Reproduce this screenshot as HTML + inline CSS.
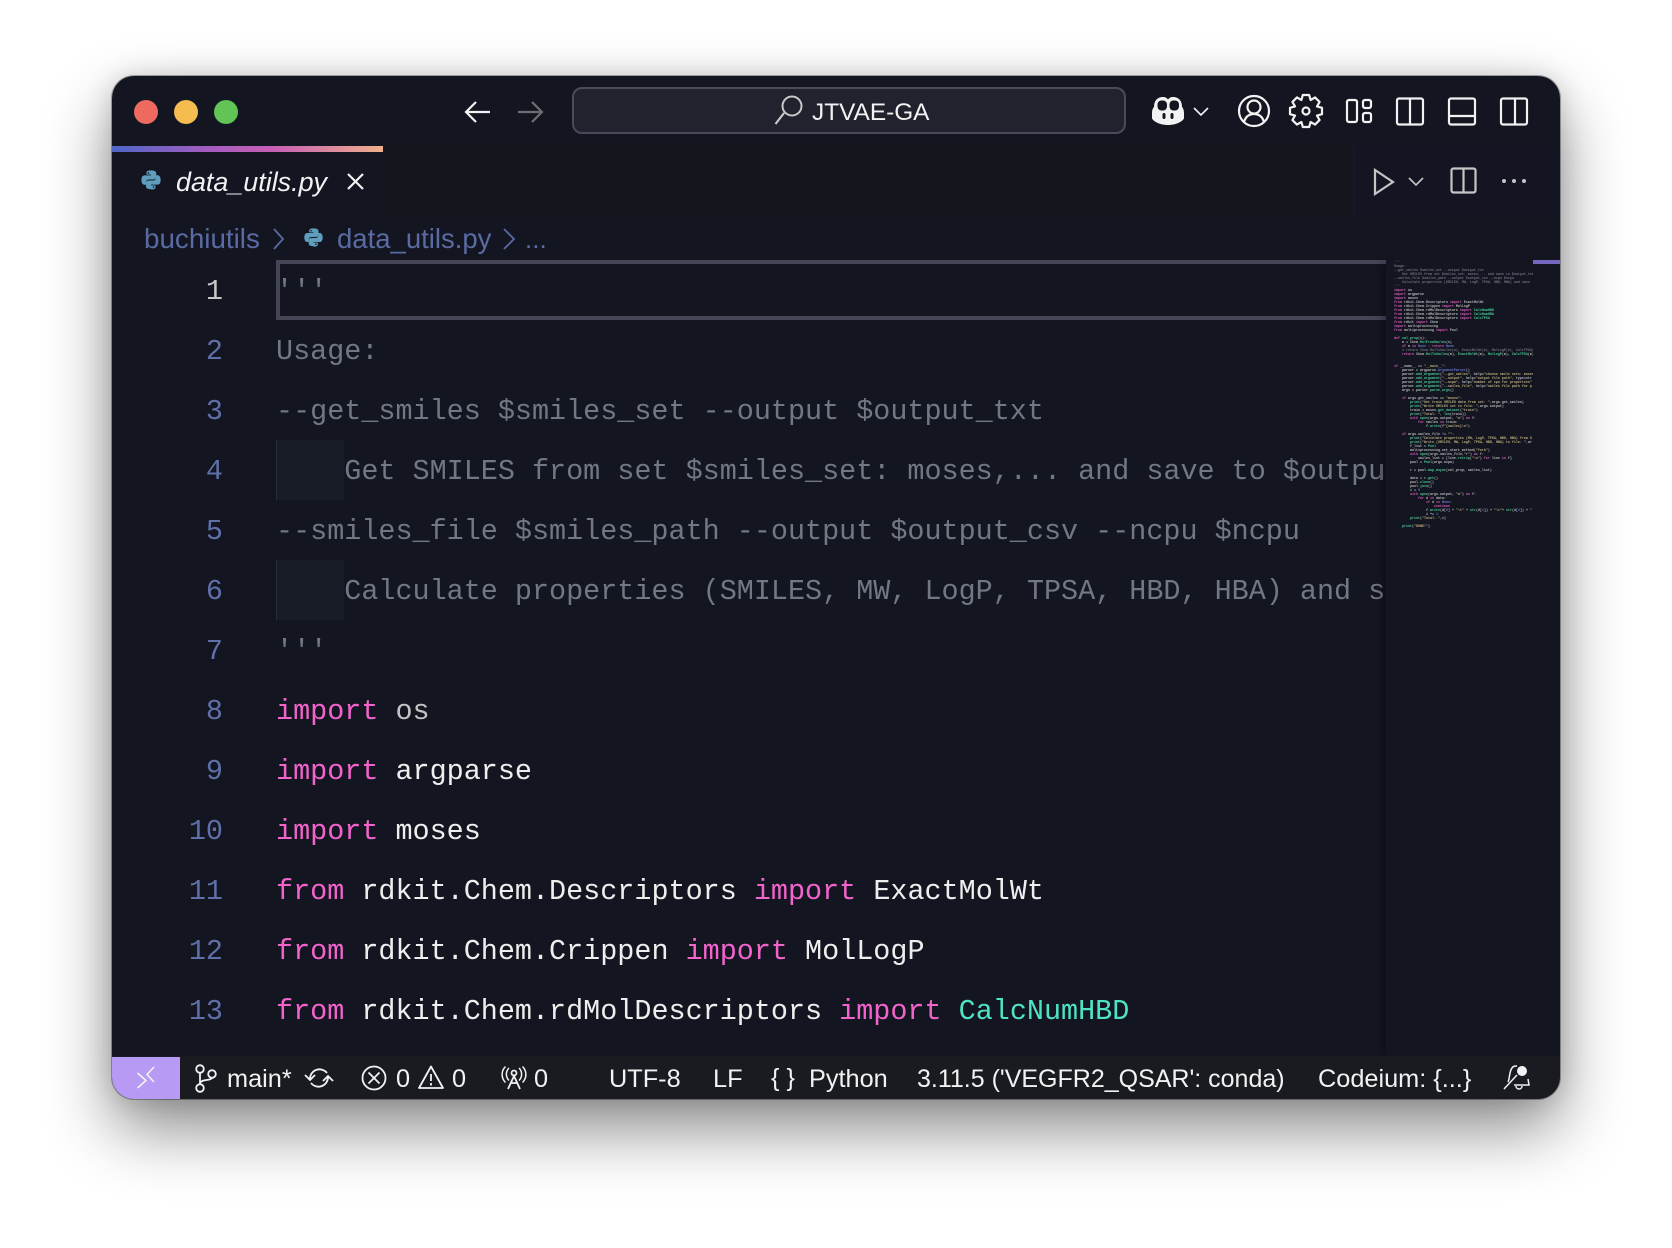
<!DOCTYPE html>
<html><head><meta charset="utf-8">
<style>
html,body{margin:0;padding:0;width:1672px;height:1248px;overflow:hidden;background:#fff}
*{box-sizing:border-box}
#win{position:absolute;left:112px;top:76px;width:1448px;height:1023px;background:#131520;border-radius:22px;overflow:hidden;}
#shadow{position:absolute;left:112px;top:76px;width:1448px;height:1023px;border-radius:22px;box-shadow:0 30px 66px 0 rgba(0,0,0,.46),0 0 26px rgba(0,0,0,.14),0 0 0 1px rgba(0,0,0,.3)}
.abs{position:absolute}
.t{position:absolute;white-space:pre;font-family:"Liberation Sans",sans-serif;color:#f2f2f2}
.ln{position:absolute;left:0;width:111px;text-align:right;height:60px;font:28.45px/64px "Liberation Mono",monospace;color:#5f70a8}
.cl{position:absolute;left:164px;height:60px;white-space:pre;font:28.45px/64px "Liberation Mono",monospace;color:#eeeeee}
.c{color:#737683}.k{color:#f263cc}.g{color:#4fe3c6}
svg{position:absolute;overflow:visible}
.s{font-size:25.3px;line-height:30px;top:988px}
#mm{position:absolute;left:1274px;top:184px;width:147px;height:796px;background:#131520;overflow:hidden;box-shadow:-6px 0 8px -3px rgba(0,0,0,.35)}
#mm pre{margin:0;position:absolute;left:8px;top:0;font:bold 3.333px/4px "Liberation Mono",monospace;color:#d0d0d0;opacity:.85}
#mm .c{color:#7c7f8c}#mm .k{color:#f263cc}#mm .g{color:#4fe3a6}#mm .y{color:#d8c48a}#mm .b{color:#7a80e8}
</style></head><body>
<div id="shadow"></div>
<div id="win">
 <!-- title bar -->
 <div class="abs" style="left:22px;top:24px;width:24px;height:24px;border-radius:50%;background:#ee6a5f"></div>
 <div class="abs" style="left:62px;top:24px;width:24px;height:24px;border-radius:50%;background:#f5bd4f"></div>
 <div class="abs" style="left:102px;top:24px;width:24px;height:24px;border-radius:50%;background:#61c454"></div>
 <svg style="left:0;top:0" width="1448" height="140" fill="none" stroke-width="2.2">
  <path d="M378 36H354M364 26L354 36L364 46" stroke="#f2f2f2"/>
  <path d="M406 36H430M420 26L430 36L420 46" stroke="#6e6e72"/>
 </svg>
 <div class="abs" style="left:460px;top:11px;width:554px;height:47px;background:#21222d;border:2px solid #4a4b58;border-radius:10px"></div>
 <svg style="left:0;top:0" width="1448" height="140" fill="none">
  <circle cx="680" cy="30" r="9.500" stroke="#c8c8c8" stroke-width="2"/>
  <path d="M672 37L663.500 48" stroke="#c8c8c8" stroke-width="2.2"/>
 </svg>
 <div class="t" style="left:700px;top:22px;font-size:24.400px;line-height:30px">JTVAE-GA</div>
 <svg style="left:0;top:0" width="1448" height="140" fill="none" stroke="#f2f2f2" stroke-width="2.2">
  <!-- copilot -->
  <path fill="#f2f2f2" stroke="none" d="M1040 37c0-3 1-5 2-6 0-6 3-10 9-10 2.500 0 4 1 5 2.500 1-1.500 2.500-2.500 5-2.500 6 0 9 4 9 10 1 1 2 3 2 6v5c0 2-6 7-16 7s-16-5-16-7z"/>
  <rect x="1045.500" y="24.500" width="9.500" height="10" rx="4" fill="#131520" stroke="none"/>
  <rect x="1057.500" y="24.500" width="9.500" height="10" rx="4" fill="#131520" stroke="none"/>
  <rect x="1050.500" y="37" width="3" height="6" rx="1.500" fill="#131520" stroke="none"/>
  <rect x="1058.500" y="37" width="3" height="6" rx="1.500" fill="#131520" stroke="none"/>
  <path d="M1082 32l7 7 7-7" stroke-width="1.600"/>
  <!-- account -->
  <circle cx="1142" cy="35" r="15"/><circle cx="1142" cy="31" r="6.500"/>
  <path d="M1132 46c1.500-5 5-8 10-8s8.500 3 10 8"/>
  <!-- gear -->
  <circle cx="1194" cy="35" r="3.500"/>
  <path stroke-linejoin="round" transform="translate(1194 35)" d="M-3.200-16H3.200L4.600-11L9.050-13.570L13.570-9.050L11-4.600L16-3.200V3.200L11 4.600L13.570 9.050L9.050 13.570L4.600 11L3.200 16H-3.200L-4.600 11L-9.050 13.570L-13.570 9.050L-11 4.600L-16 3.200V-3.200L-11-4.600L-13.570-9.050L-9.050-13.570L-4.600-11Z"/>
  <!-- layouts -->
  <rect x="1235" y="24" width="10" height="22" rx="2"/>
  <rect x="1251" y="24" width="8" height="8" rx="2"/><rect x="1251" y="37" width="8" height="9" rx="2"/>
  <rect x="1285" y="22.500" width="26" height="26" rx="2"/><path d="M1298 22.500v26"/>
  <rect x="1337" y="22.500" width="26" height="26" rx="2"/><path d="M1337 40h26"/>
  <rect x="1389" y="22.500" width="26" height="26" rx="2"/><path d="M1403 22.500v26"/>
 </svg>
 <!-- tab bar -->
 <div class="abs" style="left:0;top:70px;width:1448px;height:70px;background:#14161d"></div>
 <div class="abs" style="left:1241px;top:70px;width:207px;height:70px;background:#131622;border-left:2px solid #171922"></div>
 <div class="abs" style="left:0;top:70px;width:271px;height:70px;background:#131520"></div>
 <div class="abs" style="left:0;top:70px;width:271px;height:6px;background:linear-gradient(90deg,#4f66c8 0%,#a45cc0 35%,#c85fb4 60%,#eeb08a 100%)"></div>
 <svg style="left:28px;top:93px" width="22" height="22" viewBox="0 0 24 24" fill="#5f9dbd"><path d="M11.900 1.500C6.800 1.500 7.100 3.700 7.100 3.700v2.400h4.900v.8H5.200S1.500 6.400 1.500 11.900s3.200 5.300 3.200 5.300h1.900v-2.600s-.1-3.200 3.200-3.200h4.900s3 0 3-3V4.600s.5-3.100-5.800-3.100zM9.200 3.400a.9.900 0 1 1 0 1.800.9.900 0 0 1 0-1.800z"/><path d="M12.100 22.500c5.100 0 4.800-2.200 4.800-2.200v-2.400H12v-.8h6.800s3.700.5 3.700-5-3.200-5.300-3.200-5.300h-1.900v2.600s.1 3.200-3.200 3.200H9.500s-3 0-3 3v3.300s-.5 3.100 5.600 3.100zM14.800 20.600a.9.900 0 1 1 0-1.800.9.900 0 0 1 0 1.800z"/></svg>
 <div class="t" style="left:64px;top:91px;font-size:26.900px;line-height:30px;font-style:italic">data_utils.py</div>
 <svg style="left:0;top:0" width="1448" height="140" fill="none" stroke="#f2f2f2" stroke-width="2.2"><path d="M236 98L251 113M251 98L236 113"/></svg>
 <svg style="left:0;top:0" width="1448" height="140" fill="none" stroke="#c5c5c5" stroke-width="2.200">
  <path d="M1263 94L1281 106L1263 118Z"/>
  <path d="M1297 102l7 7 7-7" stroke-width="1.600"/>
  <rect x="1339.500" y="92.500" width="24" height="24" rx="2"/><path d="M1351.500 92.500v24"/>
  <circle cx="1392" cy="105" r="2" fill="#c5c5c5" stroke="none"/><circle cx="1402" cy="105" r="2" fill="#c5c5c5" stroke="none"/><circle cx="1412" cy="105" r="2" fill="#c5c5c5" stroke="none"/>
 </svg>
 <!-- breadcrumb -->
 <div class="t" style="left:32px;top:148px;font-size:27.800px;line-height:30px;color:#5a6aa3">buchiutils</div>
 <svg style="left:0;top:0" width="1448" height="190" fill="none" stroke="#5a6aa3" stroke-width="1.800"><path d="M162 153L171 163L162 173M392 153L402 163L392 173"/></svg>
 <svg style="left:191px;top:151px" width="21" height="21" viewBox="0 0 24 24" fill="#5f9dbd"><path d="M11.900 1.500C6.800 1.500 7.100 3.700 7.100 3.700v2.400h4.900v.8H5.200S1.500 6.400 1.500 11.900s3.200 5.300 3.200 5.300h1.900v-2.600s-.1-3.200 3.200-3.200h4.900s3 0 3-3V4.600s.5-3.100-5.800-3.100zM9.200 3.400a.9.900 0 1 1 0 1.800.9.900 0 0 1 0-1.800z"/><path d="M12.100 22.500c5.100 0 4.800-2.200 4.800-2.200v-2.400H12v-.8h6.800s3.700.5 3.700-5-3.200-5.300-3.200-5.300h-1.900v2.600s.1 3.200-3.200 3.200H9.500s-3 0-3 3v3.300s-.5 3.100 5.600 3.100zM14.800 20.600a.9.900 0 1 1 0-1.800.9.900 0 0 1 0 1.800z"/></svg>
 <div class="t" style="left:225px;top:148px;font-size:27.500px;line-height:30px;color:#5a6aa3">data_utils.py</div>
 <div class="t" style="left:413px;top:148px;font-size:26px;line-height:30px;color:#5a6aa3">...</div>
 <!-- editor -->
 <div class="abs" style="left:164px;top:184px;width:1110px;height:60px;border:4px solid #454558;border-right:none"></div>
 <div class="abs" style="left:164px;top:364px;width:68px;height:60px;background:#181c26;border-left:1px solid #2a2d3a"></div>
 <div class="abs" style="left:164px;top:484px;width:68px;height:60px;background:#181c26;border-left:1px solid #2a2d3a"></div>
 <div class="ln" style="top:184px;color:#c8c8c8">1</div>
 <div class="ln" style="top:244px">2</div>
 <div class="ln" style="top:304px">3</div>
 <div class="ln" style="top:364px">4</div>
 <div class="ln" style="top:424px">5</div>
 <div class="ln" style="top:484px">6</div>
 <div class="ln" style="top:544px">7</div>
 <div class="ln" style="top:604px">8</div>
 <div class="ln" style="top:664px">9</div>
 <div class="ln" style="top:724px">10</div>
 <div class="ln" style="top:784px">11</div>
 <div class="ln" style="top:844px">12</div>
 <div class="ln" style="top:904px">13</div>
 <div class="abs" style="left:164px;top:184px;width:1110px;height:796px;overflow:hidden">
  <div class="cl c" style="left:0;top:0">'''</div>
  <div class="cl c" style="left:0;top:60px">Usage:</div>
  <div class="cl c" style="left:0;top:120px">--get_smiles $smiles_set --output $output_txt</div>
  <div class="cl c" style="left:0;top:180px">    Get SMILES from set $smiles_set: moses,... and save to $output_txt</div>
  <div class="cl c" style="left:0;top:240px">--smiles_file $smiles_path --output $output_csv --ncpu $ncpu</div>
  <div class="cl c" style="left:0;top:300px">    Calculate properties (SMILES, MW, LogP, TPSA, HBD, HBA) and save</div>
  <div class="cl c" style="left:0;top:360px">'''</div>
  <div class="cl" style="left:0;top:420px"><span class="k">import</span> <span style="color:#c4c4c4">os</span></div>
  <div class="cl" style="left:0;top:480px"><span class="k">import</span> argparse</div>
  <div class="cl" style="left:0;top:540px"><span class="k">import</span> moses</div>
  <div class="cl" style="left:0;top:600px"><span class="k">from</span> rdkit.Chem.Descriptors <span class="k">import</span> ExactMolWt</div>
  <div class="cl" style="left:0;top:660px"><span class="k">from</span> rdkit.Chem.Crippen <span class="k">import</span> MolLogP</div>
  <div class="cl" style="left:0;top:720px"><span class="k">from</span> rdkit.Chem.rdMolDescriptors <span class="k">import</span> <span class="g">CalcNumHBD</span></div>
 </div>
 <!-- minimap -->
 <div id="mm"><pre><span class="c">'''
Usage:
--get_smiles $smiles_set --output $output_txt
    Get SMILES from set $smiles_set: moses,... and save to $output_txt
--smiles_file $smiles_path --output $output_csv --ncpu $ncpu
    Calculate properties (SMILES, MW, LogP, TPSA, HBD, HBA) and save
'''</span>
<span class="k">import</span> os
<span class="k">import</span> argparse
<span class="k">import</span> moses
<span class="k">from</span> rdkit.Chem.Descriptors <span class="k">import</span> ExactMolWt
<span class="k">from</span> rdkit.Chem.Crippen <span class="k">import</span> MolLogP
<span class="k">from</span> rdkit.Chem.rdMolDescriptors <span class="k">import</span> <span class="g">CalcNumHBD</span>
<span class="k">from</span> rdkit.Chem.rdMolDescriptors <span class="k">import</span> <span class="g">CalcNumHBA</span>
<span class="k">from</span> rdkit.Chem.rdMolDescriptors <span class="k">import</span> <span class="g">CalcTPSA</span>
<span class="k">from</span> rdkit <span class="k">import</span> Chem
<span class="k">import</span> multiprocessing
<span class="k">from</span> multiprocessing <span class="k">import</span> Pool

<span class="k">def</span> <span class="g">cal_prop</span>(<span class="y">s</span>):
    m = Chem.<span class="g">MolFromSmiles</span>(s)
    <span class="k">if</span> m <span class="k">is</span> <span class="b">None</span> : <span class="k">return</span> <span class="b">None</span>
    <span class="c"># return Chem.MolToSmiles(m), ExactMolWt(m), MolLogP(m), CalcTPSA(m)</span>
    <span class="k">return</span> Chem.<span class="g">MolToSmiles</span>(m), <span class="g">ExactMolWt</span>(m), <span class="g">MolLogP</span>(m), <span class="g">CalcTPSA</span>(m)


<span class="k">if</span> __name__ == <span class="y">"__main__"</span>:
    parser = argparse.<span class="b">ArgumentParser</span>()
    parser.<span class="g">add_argument</span>(<span class="y">"--get_smiles"</span>, help=<span class="y">"choose smile sets: moses,..."</span>
    parser.<span class="g">add_argument</span>(<span class="y">"--output"</span>, help=<span class="y">"output file path"</span>, type=str
    parser.<span class="g">add_argument</span>(<span class="y">"--ncpu"</span>, help=<span class="y">"number of cpu for properties"</span>
    parser.<span class="g">add_argument</span>(<span class="y">"--smiles_file"</span>, help=<span class="y">"smiles file path for p</span>
    args = parser.<span class="g">parse_args</span>()

    <span class="k">if</span> args.get_smiles == <span class="y">"moses"</span>:
        <span class="g">print</span>(<span class="y">"Get train SMILES data from set: "</span>,args.get_smiles)
        <span class="g">print</span>(<span class="y">"Write SMILES set to file: "</span>,args.output)
        train = moses.<span class="g">get_dataset</span>(<span class="y">"train"</span>)
        <span class="g">print</span>(<span class="y">"Total: "</span>, <span class="g">len</span>(train))
        <span class="k">with</span> <span class="g">open</span>(args.output, <span class="y">"w"</span>) <span class="k">as</span> f:
            <span class="k">for</span> smiles <span class="k">in</span> train:
                f.<span class="g">write</span>(f<span class="y">"{smiles}\n"</span>)

    <span class="k">if</span> args.smiles_file != <span class="y">""</span>:
        <span class="g">print</span>(<span class="y">"Calculate properties (MW, LogP, TPSA, HBD, HBA) from S</span>
        <span class="g">print</span>(<span class="y">"Write (SMILES, MW, LogP, TPSA, HBD, HBA) to file: "</span>,ar
        f_list = <span class="g">Pool</span>
        multiprocessing.set_start_method(<span class="y">"fork"</span>)
        <span class="k">with</span> <span class="g">open</span>(args.smiles_file,<span class="y">"r"</span>) <span class="k">as</span> f:
            smiles_list = [line.<span class="g">rstrip</span>(<span class="y">"\n"</span>) <span class="k">for</span> line <span class="k">in</span> f]
        pool = <span class="g">Pool</span>(args.ncpu)

        r = pool.<span class="g">map_async</span>(cal_prop, smiles_list)

        data = r.<span class="g">get</span>()
        pool.<span class="g">close</span>()
        pool.<span class="g">join</span>()
        i = <span class="b">0</span>
        <span class="k">with</span> <span class="g">open</span>(args.output, <span class="y">"w"</span>) <span class="k">as</span> f:
            <span class="k">for</span> d <span class="k">in</span> data:
                <span class="k">if</span> d <span class="k">is</span> <span class="b">None</span>:
                    <span class="k">continue</span>
                f.<span class="g">write</span>(d[<span class="b">0</span>] + <span class="y">"\t"</span> + <span class="g">str</span>(d[<span class="b">1</span>]) + <span class="y">"\t"</span>+ <span class="g">str</span>(d[<span class="b">2</span>]) + <span class="y">"</span>
                i += <span class="b">1</span>
        <span class="g">print</span>(<span class="y">"Total: "</span>,i)

    <span class="g">print</span>(<span class="y">"DONE!"</span>)</pre></div>
 <div class="abs" style="left:1421px;top:184px;width:27px;height:4px;background:#7567c0"></div>
 <div class="abs" style="left:1268px;top:389px;width:3px;height:15px;background:#55565f"></div>
 <!-- status -->
 <div class="abs" style="left:0;top:980px;width:1448px;height:43px;background:#191b20"></div>
 <div class="abs" style="left:0;top:981px;width:68px;height:42px;background:#b79af3"></div>
 <svg style="left:0;top:0" width="1448" height="1023" fill="none" stroke="#f2f2f2" stroke-width="1.800">
  <path d="M25.500 997L34 1004.500L25.500 1012M42 991L35 998.500L42 1006" stroke-width="1.600"/>
  <!-- branch -->
  <circle cx="88" cy="993" r="3.800"/><circle cx="88" cy="1012" r="3.800"/><circle cx="100" cy="998" r="3.800"/>
  <path d="M88 997V1008M88 1007C90 1003 98 1005 100 1002"/>
  <!-- sync -->
  <path d="M198 1003A9.500 9.500 0 0 1 215 997M216 1001A9.500 9.500 0 0 1 199 1007M193 999L198 1004L203 999M211 1005L216 1000L221 1005"/>
  <!-- error -->
  <circle cx="262" cy="1002" r="11.500"/><path d="M256.500 996.500L267.500 1007.500M267.500 996.500L256.500 1007.500"/>
  <!-- warning -->
  <path d="M319 990.500L331 1012H307Z" stroke-linejoin="round"/><path d="M319 998V1005M319 1007V1009.500"/>
  <!-- antenna -->
  <path d="M396 1013L402 1000L408 1013M398 1007H406"/><circle cx="402" cy="997" r="2.500"/>
  <path d="M397 992C393.500 995.500 393.500 1001 397 1004.500M407 992C410.500 995.500 410.500 1001 407 1004.500M393.500 990.500C389 995 389 1002 393.500 1006.500M410.500 990.500C415 995 415 1002 410.500 1006.500" stroke-width="1.500"/>
  <!-- bell -->
  <path d="M1392 1013L1405 999M1396 1006C1398 1002 1397 996 1400 992C1401 990 1403 990 1405 990M1416 1003L1417 1009H1402M1404 1010C1404 1014 1410 1014 1410 1010" stroke-width="1.500"/>
  <circle cx="1410" cy="995" r="5" fill="#f2f2f2" stroke="none"/>
 </svg>
 <div class="t s" style="left:115px">main*</div>
 <div class="t s" style="left:284px">0</div>
 <div class="t s" style="left:340px">0</div>
 <div class="t s" style="left:422px">0</div>
 <div class="t s" style="left:497px">UTF-8</div>
 <div class="t s" style="left:601px">LF</div>
 <div class="t s" style="left:659px;top:987px">{ }</div>
 <div class="t s" style="left:697px">Python</div>
 <div class="t s" style="left:805px;font-size:25px">3.11.5 ('VEGFR2_QSAR': conda)</div>
 <div class="t s" style="left:1206px">Codeium: {...}</div>
</div>
</body></html>
